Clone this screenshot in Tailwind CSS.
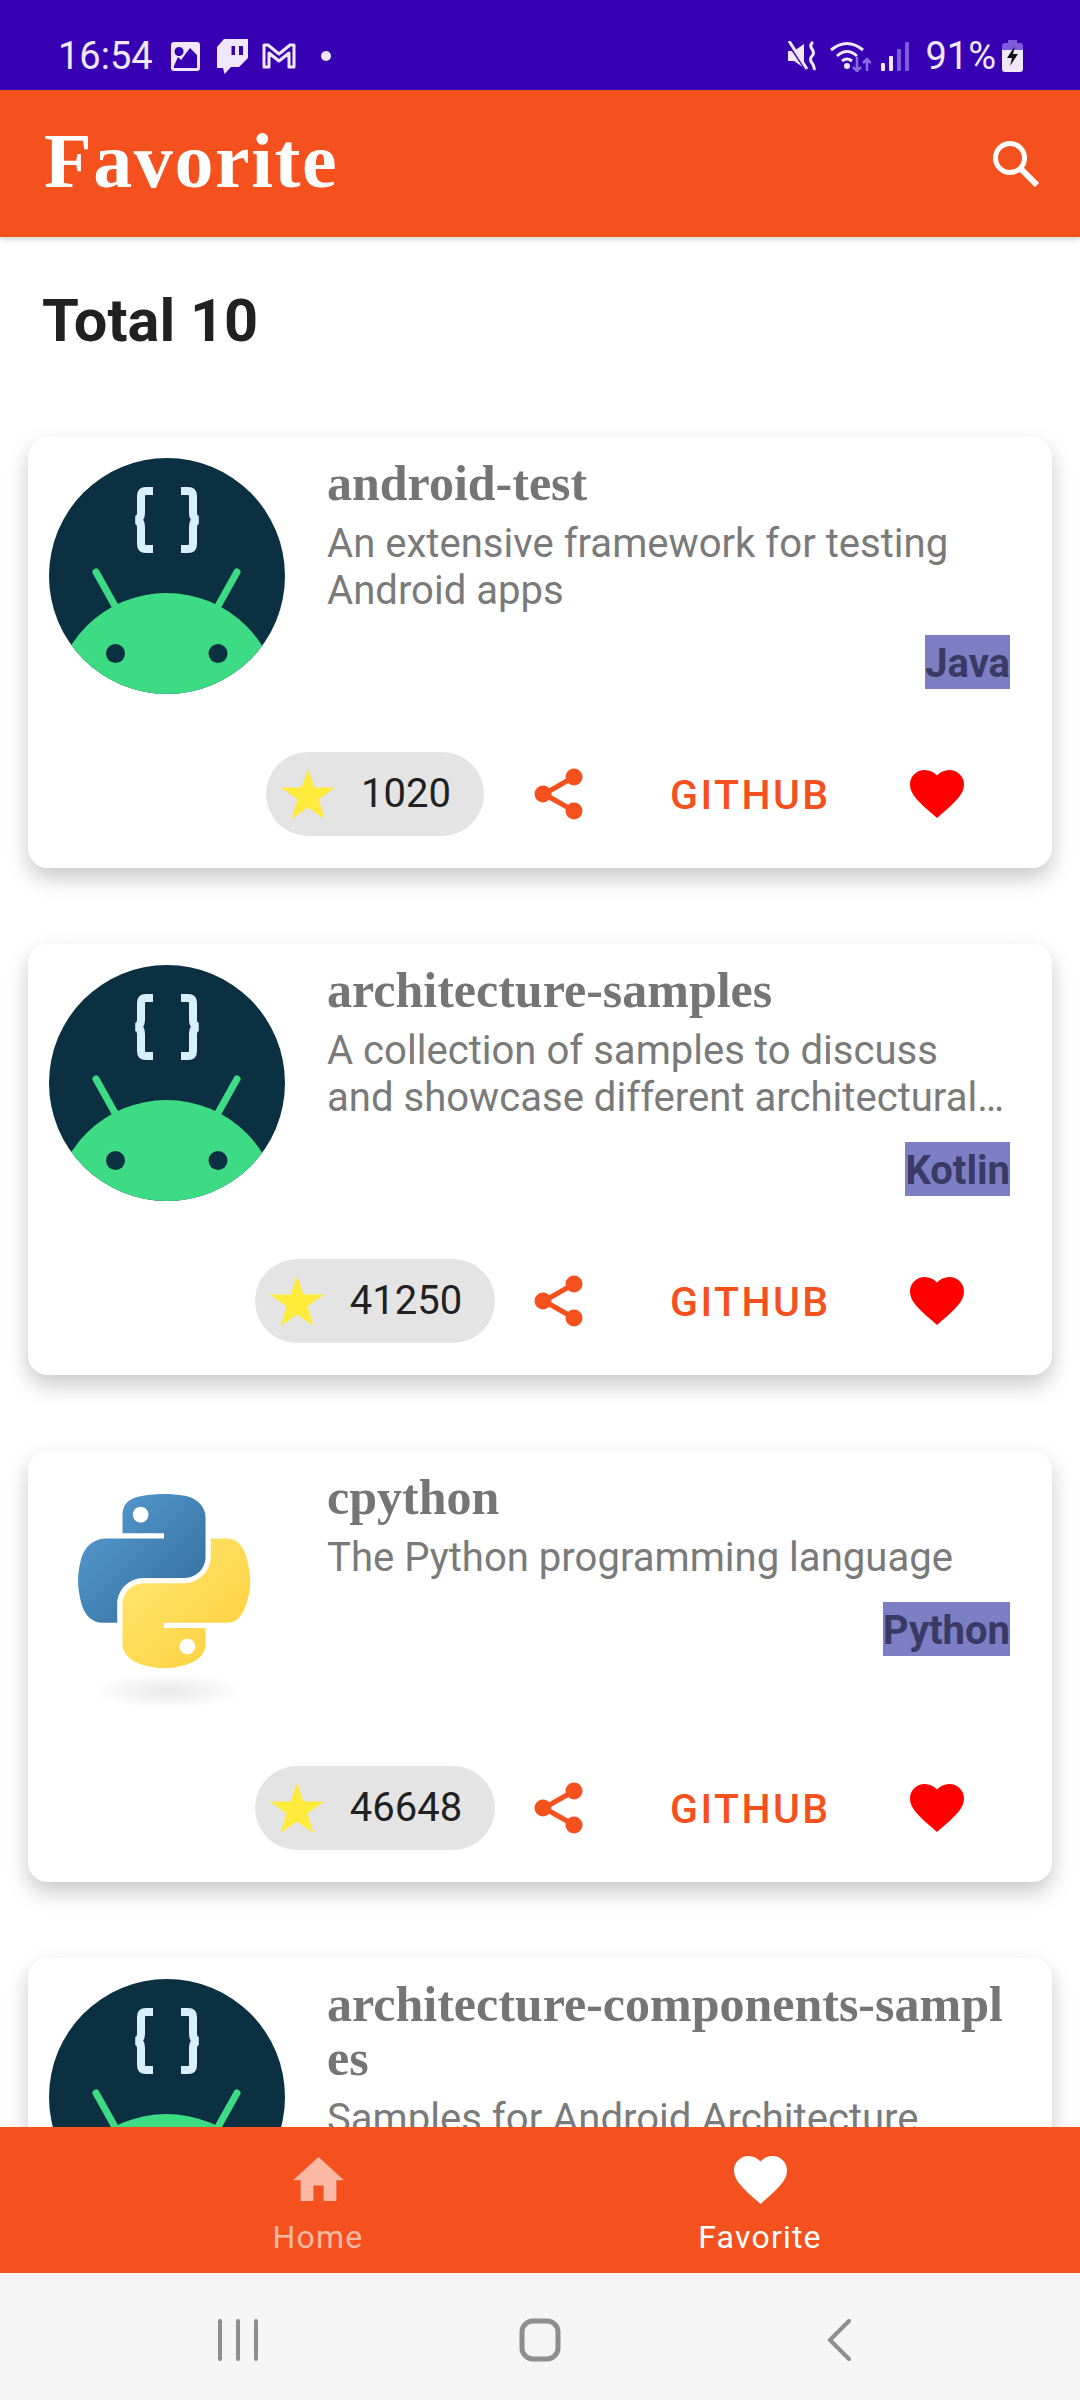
<!DOCTYPE html>
<html lang="en">
<head>
    <meta charset="UTF-8">
    <meta name="viewport" content="width=device-width, initial-scale=1.0">
    <title>Favorite</title>
    <script src="https://cdn.jsdelivr.net/npm/@tailwindcss/browser@4"></script>
</head>
<body class="bg-white font-['Roboto',sans-serif]">
    <svg class="block w-0 h-0">
        <defs>
            <linearGradient id="pyBlue" x1="0" y1="0" x2="1" y2="1">
                <stop offset="0" stop-color="#5a9fd4"/><stop offset="1" stop-color="#306998"/>
            </linearGradient>
            <linearGradient id="pyYellow" x1="0" y1="0" x2="1" y2="1">
                <stop offset="0" stop-color="#ffe873"/><stop offset="1" stop-color="#ffcf3a"/>
            </linearGradient>
            <radialGradient id="pyShadow">
                <stop offset="0" stop-color="#000" stop-opacity="0.09"/><stop offset="1" stop-color="#000" stop-opacity="0"/>
            </radialGradient>
            <clipPath id="droidClip"><circle cx="118" cy="118" r="118"/></clipPath>
            <symbol id="droid" viewBox="0 0 236 236">
                <circle cx="118" cy="118" r="118" fill="#0a3042"/>
                <g clip-path="url(#droidClip)">
                    <path d="M47 114L66 148M188 114L169 148" stroke="#3ddc84" stroke-width="7" stroke-linecap="round" fill="none"/>
                    <circle cx="117.5" cy="248" r="113" fill="#3ddc84"/>
                </g>
                <circle cx="66.5" cy="195.5" r="9.5" fill="#0a3042"/>
                <circle cx="169" cy="195.5" r="9.5" fill="#0a3042"/>
                <path d="M104 33H97Q92 33 92 38V55Q92 61 87 62Q92 63 92 69V86Q92 91 97 91H104M132 33H139Q144 33 144 38V55Q144 61 149 62Q144 63 144 69V86Q144 91 139 91H132" stroke="#d7effe" stroke-width="8" fill="none"/>
            </symbol>
            <symbol id="python" viewBox="0 0 236 236">
                <ellipse cx="119" cy="219" rx="76" ry="18" fill="url(#pyShadow)"/>
                <g transform="translate(29 22) scale(1.55)">
                    <path fill="url(#pyBlue)" d="M54.92 0C50.34.02 45.96.41 42.11 1.09 30.76 3.1 28.7 7.29 28.7 15.03V25.25H55.51V28.66H18.64C10.85 28.66 4.02 33.34 1.89 42.25-.57 52.47-.6 58.84 1.89 69.49 3.79 77.43 8.3 83.06 16.1 83.06H25.31V70.81C25.31 61.96 32.97 54.15 42.1 54.15H68.88C76.34 54.15 82.29 48 82.29 40.5V15.03C82.29 7.75 76.15 2.29 68.88 1.09 64.28.33 59.5-.02 54.92 0ZM40.42 8.22C43.19 8.22 45.45 10.52 45.45 13.35 45.45 16.17 43.19 18.45 40.42 18.45 37.64 18.45 35.39 16.17 35.39 13.35 35.39 10.52 37.64 8.22 40.42 8.22Z"/>
                    <path fill="url(#pyYellow)" d="M85.64 28.66V40.56C85.64 49.79 77.82 57.56 68.88 57.56H42.1C34.77 57.56 28.7 63.84 28.7 71.19V96.72C28.7 103.99 35.02 108.26 42.1 110.34 50.58 112.83 58.71 113.28 68.88 110.34 75.63 108.38 82.29 104.44 82.29 96.72V86.5H55.51V83.09H95.69C103.48 83.09 106.39 77.66 109.1 69.5 111.9 61.1 111.78 53.02 109.1 42.25 107.18 34.5 103.5 28.66 95.69 28.66H85.64ZM70.58 93.31C73.36 93.31 75.61 95.59 75.61 98.41 75.61 101.24 73.36 103.54 70.58 103.54 67.81 103.54 65.55 101.24 65.55 98.41 65.55 95.59 67.81 93.31 70.58 93.31Z"/>
                </g>
            </symbol>
            <symbol id="star" viewBox="0 0 54 50">
                <path d="M27 0L33.5 18.5H54L37.5 30.5L43.5 50L27 38.5L10.5 50L16.5 30.5L0 18.5H20.5Z" fill="#ffeb3b"/>
            </symbol>
            <symbol id="share" viewBox="0 0 50 52">
                <path d="M40 9L10 26L40 43" stroke="#f4511e" stroke-width="5" fill="none"/>
                <circle cx="40" cy="9" r="8.5" fill="#f4511e"/><circle cx="9" cy="26" r="8.5" fill="#f4511e"/><circle cx="40" cy="43" r="8.5" fill="#f4511e"/>
            </symbol>
            <symbol id="heart" viewBox="2 3 20 18.35" preserveAspectRatio="none">
                <path d="M12 21.35l-1.45-1.32C5.4 15.36 2 12.28 2 8.5 2 5.42 4.42 3 7.5 3c1.74 0 3.41.81 4.5 2.09C13.09 3.81 14.76 3 16.5 3 19.58 3 22 5.42 22 8.5c0 3.78-3.4 6.86-8.55 11.54L12 21.35z"/>
            </symbol>
        </defs>
    </svg>

    <div class="flex flex-col h-[2400px] overflow-hidden">
        <!-- status bar -->
        <div class="h-[90px] shrink-0 bg-[#3700b3] text-[#efe8fb] flex items-center pl-[58px] pr-[57px] pt-[22px] z-20">
            <span class="text-[38px] leading-none w-[113px]">16:54</span>
            <svg class="w-[29px] h-[29px]" viewBox="0 0 29 29"><path fill-rule="evenodd" fill="currentColor" d="M3 0H26Q29 0 29 3V26Q29 29 26 29H3Q0 29 0 26V3Q0 0 3 0ZM8 5a4.5 4.5 0 1 0 .01 0ZM3 24V26H26V13L19 6L10 18L7 15Z"/></svg>
            <svg class="ml-[17px] w-[31px] h-[35px]" viewBox="0 0 31 35"><path fill-rule="evenodd" fill="currentColor" d="M0 8L7 0H31V19L22 28H14L7.5 35L6 29H0ZM14.5 7V16H18V7ZM22 7V16H26V7Z"/></svg>
            <svg class="ml-[14px] w-[34px] h-[26px]" viewBox="0 0 34 26"><path fill="none" stroke="currentColor" stroke-width="3" stroke-linejoin="round" d="M2 2V24H7V10L17 18L27 10V24H32V2H28L17 11L6 2Z"/></svg>
            <span class="ml-[25px] w-[10px] h-[10px] rounded-full bg-current"></span>
            <div class="ml-auto flex items-center">
                <svg class="w-[30px] h-[30px]" viewBox="0 0 30 30"><path fill="currentColor" d="M1 10H7L17 3V27L7 20H1Z"/><path stroke="#3700b3" stroke-width="3" d="M0 0L20 30"/><path stroke="currentColor" stroke-width="3" d="M2 0L20 28"/><path fill="none" stroke="currentColor" stroke-width="3" d="M26 1Q22 4 25 8T25 15T25 22T27 29"/></svg>
                <svg class="ml-[13px] w-[41px] h-[32px]" viewBox="0 0 41 32"><path fill="none" stroke="currentColor" stroke-width="3" d="M1 10Q17-3 33 10M7 16Q17 7 27 16M12 21Q17 17 22 21"/><circle cx="17" cy="26" r="3" fill="currentColor"/><path fill="none" stroke="#8b6be0" stroke-width="2.5" d="M27 17V31M23 27L27 31L31 27M37 31V19M33 23L37 19L41 23"/></svg>
                <svg class="ml-[10px] w-[28px] h-[29px]" viewBox="0 0 28 29"><rect x="0" y="21" width="4" height="8" rx="1" fill="currentColor"/><rect x="8" y="14" width="4" height="15" rx="1" fill="currentColor"/><rect x="16" y="7" width="4" height="22" rx="1" fill="#7c5cdc"/><rect x="24" y="0" width="4" height="29" rx="1" fill="#7c5cdc"/></svg>
                <span class="ml-[16px] text-[38px] leading-none">91%</span>
                <svg class="ml-[6px] w-[21px] h-[32px]" viewBox="0 0 21 32"><path fill="#7c5cdc" d="M6 0H15V3H18Q21 3 21 6V12H0V6Q0 3 3 3H6Z"/><path fill="currentColor" d="M0 10H21V29Q21 32 18 32H3Q0 32 0 29Z"/><path fill="#111" d="M13 6L5 18H10L8 26L16 14H11Z"/></svg>
            </div>
        </div>

        <!-- app bar -->
        <header class="h-[147px] shrink-0 bg-[#f4511e] flex items-center justify-between pl-[44px] pr-[41px] shadow-[0_2px_6px_rgba(0,0,0,0.2)] z-10">
            <h1 class="font-['Liberation_Serif',serif] font-bold text-white text-[78px] tracking-[1.6px] leading-none -mt-[5px]">Favorite</h1>
            <svg class="w-[46px] h-[46px]" viewBox="0 0 46 46"><circle cx="17" cy="17" r="14.5" fill="none" stroke="#fff" stroke-width="5"/><path d="M28 28L44 44" stroke="#fff" stroke-width="6"/></svg>
        </header>

        <!-- list -->
        <main class="flex-1 overflow-hidden">
            <h2 class="pl-[42px] pt-[52px] h-[200px] text-[59.5px] leading-[64px] font-bold text-[#212121]">Total 10</h2>
            <div class="flex flex-col gap-[76px] px-[28px]">

                <article class="h-[431px] shrink-0 bg-white rounded-[20px] shadow-[0_10px_22px_rgba(0,0,0,0.22)] flex flex-col pt-[21px] pl-[21px] pr-[42px]">
                    <div class="flex gap-[42px]">
                        <svg class="w-[236px] h-[236px] shrink-0"><use href="#droid"/></svg>
                        <div class="flex-1">
                            <h3 class="font-['Liberation_Serif',serif] font-bold text-[50px] leading-[54px] text-[#757575] -mt-[2px]">android-test</h3>
                            <p class="mt-[10px] text-[40.1px] leading-[47px] text-[#7a7a7a]">An extensive framework for testing<br>Android apps</p>
                            <div class="flex justify-end mt-[21px]"><span class="h-[54px] bg-[#7c7fc3] text-[#3a3a66] font-bold text-[40px] leading-[58px]">Java</span></div>
                        </div>
                    </div>
                    <div class="mt-auto mb-[32px] -ml-[21px] -mr-[42px] flex items-center h-[84px]">
                        <div class="w-[294px] ml-[200px] flex justify-center"><div class="h-[84px] rounded-full bg-[#e4e4e4] flex items-center pl-[15px] pr-[33px]"><svg class="w-[54px] h-[50px]"><use href="#star"/></svg><span class="ml-[26px] text-[40px] text-[#212121]">1020</span></div></div>
                        <svg class="ml-[12px] w-[50px] h-[52px]"><use href="#share"/></svg>
                        <span class="ml-[86px] mt-[4px] w-[240px] text-[41px] tracking-[2.5px] font-medium text-[#f4511e]">GITHUB</span>
                        <svg class="w-[54px] h-[48px] fill-[#ff0000]"><use href="#heart"/></svg>
                    </div>
                </article>

                <article class="h-[431px] shrink-0 bg-white rounded-[20px] shadow-[0_10px_22px_rgba(0,0,0,0.22)] flex flex-col pt-[21px] pl-[21px] pr-[42px]">
                    <div class="flex gap-[42px]">
                        <svg class="w-[236px] h-[236px] shrink-0"><use href="#droid"/></svg>
                        <div class="flex-1">
                            <h3 class="font-['Liberation_Serif',serif] font-bold text-[50px] leading-[54px] text-[#757575] -mt-[2px]">architecture-samples</h3>
                            <p class="mt-[10px] text-[40.1px] leading-[47px] text-[#7a7a7a] whitespace-nowrap">A collection of samples to discuss<br>and showcase different architectural…</p>
                            <div class="flex justify-end mt-[21px]"><span class="h-[54px] bg-[#7c7fc3] text-[#3a3a66] font-bold text-[40px] leading-[58px]">Kotlin</span></div>
                        </div>
                    </div>
                    <div class="mt-auto mb-[32px] -ml-[21px] -mr-[42px] flex items-center h-[84px]">
                        <div class="w-[294px] ml-[200px] flex justify-center"><div class="h-[84px] rounded-full bg-[#e4e4e4] flex items-center pl-[15px] pr-[33px]"><svg class="w-[54px] h-[50px]"><use href="#star"/></svg><span class="ml-[26px] text-[40px] text-[#212121]">41250</span></div></div>
                        <svg class="ml-[12px] w-[50px] h-[52px]"><use href="#share"/></svg>
                        <span class="ml-[86px] mt-[4px] w-[240px] text-[41px] tracking-[2.5px] font-medium text-[#f4511e]">GITHUB</span>
                        <svg class="w-[54px] h-[48px] fill-[#ff0000]"><use href="#heart"/></svg>
                    </div>
                </article>

                <article class="h-[431px] shrink-0 bg-white rounded-[20px] shadow-[0_10px_22px_rgba(0,0,0,0.22)] flex flex-col pt-[21px] pl-[21px] pr-[42px]">
                    <div class="flex gap-[42px]">
                        <svg class="w-[236px] h-[236px] shrink-0"><use href="#python"/></svg>
                        <div class="flex-1">
                            <h3 class="font-['Liberation_Serif',serif] font-bold text-[50px] leading-[54px] text-[#757575] -mt-[2px]">cpython</h3>
                            <p class="mt-[10px] text-[40.1px] leading-[47px] text-[#7a7a7a]">The Python programming language</p>
                            <div class="flex justify-end mt-[21px]"><span class="h-[54px] bg-[#7c7fc3] text-[#3a3a66] font-bold text-[40px] leading-[58px]">Python</span></div>
                        </div>
                    </div>
                    <div class="mt-auto mb-[32px] -ml-[21px] -mr-[42px] flex items-center h-[84px]">
                        <div class="w-[294px] ml-[200px] flex justify-center"><div class="h-[84px] rounded-full bg-[#e4e4e4] flex items-center pl-[15px] pr-[33px]"><svg class="w-[54px] h-[50px]"><use href="#star"/></svg><span class="ml-[26px] text-[40px] text-[#212121]">46648</span></div></div>
                        <svg class="ml-[12px] w-[50px] h-[52px]"><use href="#share"/></svg>
                        <span class="ml-[86px] mt-[4px] w-[240px] text-[41px] tracking-[2.5px] font-medium text-[#f4511e]">GITHUB</span>
                        <svg class="w-[54px] h-[48px] fill-[#ff0000]"><use href="#heart"/></svg>
                    </div>
                </article>

                <article class="h-[431px] shrink-0 bg-white rounded-[20px] shadow-[0_10px_22px_rgba(0,0,0,0.22)] flex flex-col pt-[21px] pl-[21px] pr-[42px]">
                    <div class="flex gap-[42px]">
                        <svg class="w-[236px] h-[236px] shrink-0"><use href="#droid"/></svg>
                        <div class="flex-1">
                            <h3 class="font-['Liberation_Serif',serif] font-bold text-[50px] leading-[54px] text-[#757575] -mt-[2px]">architecture-components-sampl<br>es</h3>
                            <p class="mt-[10px] text-[40.1px] leading-[47px] text-[#7a7a7a]">Samples for Android Architecture</p>
                        </div>
                    </div>
                </article>
            </div>
        </main>

        <!-- bottom nav -->
        <nav class="h-[146px] shrink-0 bg-[#f4511e] grid grid-cols-2 pl-[97px] pr-[99px] z-10">
            <a class="flex flex-col items-center pt-[30px] text-white/60">
                <svg class="w-[51px] h-[44px] fill-current" viewBox="2 3 20 17" preserveAspectRatio="none"><path d="M10 20v-6h4v6h5v-8h3L12 3 2 12h3v8z"/></svg>
                <span class="mt-[18px] text-[32px] leading-[36px] tracking-[1.2px]">Home</span>
            </a>
            <a class="flex flex-col items-center pt-[29px] text-white">
                <svg class="w-[53px] h-[48px] fill-current"><use href="#heart"/></svg>
                <span class="mt-[15px] text-[32px] leading-[36px] tracking-[1.2px]">Favorite</span>
            </a>
        </nav>

        <!-- system nav -->
        <div class="h-[127px] shrink-0 bg-[#f5f5f5] flex items-center pl-[218px] pt-[6px]">
            <svg class="w-[40px] h-[42px]" viewBox="0 0 40 42"><path d="M2 2V40M20 2V40M38 2V40" stroke="#8e8e8e" stroke-width="4" stroke-linecap="round"/></svg>
            <svg class="ml-[260px] w-[44px] h-[46px]" viewBox="0 0 44 46"><rect x="4" y="4" width="36" height="38" rx="11" fill="none" stroke="#8e8e8e" stroke-width="5"/></svg>
            <svg class="ml-[265px] w-[24px] h-[42px]" viewBox="0 0 24 42"><path d="M22 2L3 21L22 40" fill="none" stroke="#8e8e8e" stroke-width="4" stroke-linecap="round" stroke-linejoin="round"/></svg>
        </div>
    </div>
</body>
</html>
